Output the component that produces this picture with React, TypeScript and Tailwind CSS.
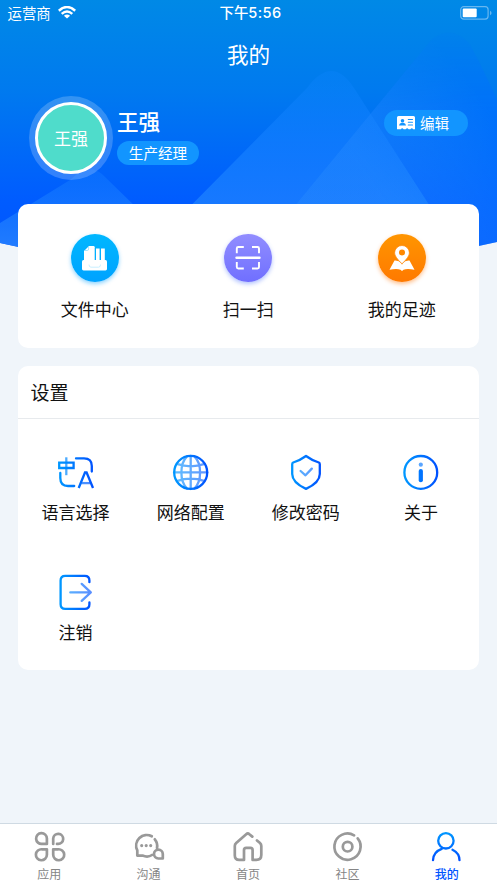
import type { ReactNode } from "react";

function Icon({ box, children, className = "" }: { box: string; children: ReactNode; className?: string }) {
  return (
    <svg viewBox={box} className={className} fill="none" strokeLinecap="round" strokeLinejoin="round" aria-hidden="true">
      {children}
    </svg>
  );
}

function Backdrop() {
  return (
    <svg className="absolute left-0 top-0 h-[300px] w-[497px]" viewBox="0 0 497 300" aria-hidden="true">
      <defs>
        <linearGradient id="sky" x1="0" y1="0" x2="0" y2="250" gradientUnits="userSpaceOnUse">
          <stop offset="0" stopColor="#0089e6" />
          <stop offset="0.36" stopColor="#007aef" />
          <stop offset="0.8" stopColor="#005cff" />
          <stop offset="1" stopColor="#0055ff" />
        </linearGradient>
        <linearGradient id="peakA" x1="0" y1="66" x2="0" y2="215" gradientUnits="userSpaceOnUse">
          <stop offset="0" stopColor="#0a84fa" stopOpacity="0.35" />
          <stop offset="0.5" stopColor="#1480ff" stopOpacity="0.65" />
          <stop offset="1" stopColor="#1c7dff" stopOpacity="0.9" />
        </linearGradient>
        <linearGradient id="peakB" x1="360" y1="170" x2="475" y2="90" gradientUnits="userSpaceOnUse">
          <stop offset="0" stopColor="#2b8fff" stopOpacity="0.36" />
          <stop offset="1" stopColor="#0070ff" stopOpacity="0.6" />
        </linearGradient>
        <linearGradient id="fade" x1="0" y1="32" x2="0" y2="110" gradientUnits="userSpaceOnUse">
          <stop offset="0" stopColor="#222" />
          <stop offset="1" stopColor="#fff" />
        </linearGradient>
        <mask id="fadeMask" maskUnits="userSpaceOnUse" x="0" y="0" width="497" height="300">
          <rect width="497" height="300" fill="url(#fade)" />
        </mask>
        <linearGradient id="peakC" x1="0" y1="165" x2="0" y2="245" gradientUnits="userSpaceOnUse">
          <stop offset="0" stopColor="#0f78ff" stopOpacity="0.45" />
          <stop offset="1" stopColor="#247fff" stopOpacity="0.9" />
        </linearGradient>
        <clipPath id="hill">
          <path d="M0 0H497V242Q248 300 0 243Z" />
        </clipPath>
      </defs>
      <g clipPath="url(#hill)">
        <rect width="497" height="300" fill="url(#sky)" />
        <path d="M0 223L70 180Q88 162 102 174L180 250V300H0Z" fill="url(#peakC)" />
        <path d="M145 252L307 88Q332 54 354 88L462 256Z" fill="url(#peakA)" />
        <path d="M257 252L432 39Q452 24 469 43Q480 62 497 100V300H257Z" fill="url(#peakB)" mask="url(#fadeMask)" />
      </g>
    </svg>
  );
}

function StatusBar() {
  return (
    <div className="grid h-[26px] grid-cols-3 items-center text-[14.4px] leading-none text-white">
      <div className="flex items-center gap-[7px] pl-[7.5px]">
        <span>运营商</span>
        <Icon box="0 0 18 13" className="-mt-[1px] h-[13px] w-[18px]">
          <g stroke="white" strokeWidth="2.5" strokeLinecap="butt">
            <path d="M.8 4.7Q9-2.6 17.2 4.7" />
            <path d="M3.7 7.9Q9 3.2 14.3 7.9" />
          </g>
          <path d="M9 12.6L5.9 9.8Q9 7.3 12.1 9.8Z" fill="white" />
        </Icon>
      </div>
      <div className="whitespace-nowrap pl-[4px] text-center font-medium">
        下午<span className="font-['Inter'] text-[14.6px] font-medium tracking-[0.35px]">5:56</span>
      </div>
      <div className="flex justify-end pr-[5px]">
        <Icon box="0 0 32 14" className="-mt-[1px] h-[14px] w-[32px]">
          <rect x=".7" y=".7" width="27.4" height="12.4" rx="3" stroke="white" strokeOpacity=".4" strokeWidth="1.2" />
          <rect x="2.7" y="2.6" width="14" height="8.7" rx="1" fill="white" />
          <path d="M30 4.8Q31.6 5.5 31.6 7T30 9.2Z" fill="white" fillOpacity=".4" />
        </Icon>
      </div>
    </div>
  );
}

function Profile() {
  return (
    <section className="flex h-[120px] items-start pl-[29px] pr-[29px] pt-[12px] text-white">
      <div className="flex size-[84px] shrink-0 rounded-full bg-white/20 p-[6px]">
        <div className="flex flex-1 items-center justify-center rounded-full border-[3px] border-white bg-[#4fdccb] text-[17px]">
          王强
        </div>
      </div>
      <div className="ml-[4px] mt-[11px] flex flex-1 flex-col items-start">
        <h2 className="text-[21.6px] font-medium leading-[28px]">王强</h2>
        <span className="mt-[6px] flex h-[24px] w-[82px] items-center justify-center rounded-full bg-[#1295ff] text-[14.6px]">
          生产经理
        </span>
      </div>
      <button className="mt-[14px] flex h-[26px] w-[84px] items-center gap-[5px] rounded-full bg-[#1295ff] pl-[13px] text-[14.5px]">
        <Icon box="397 116 18 14" className="h-[14px] w-[18px]">
          <path
            d="M398.5 116H413.5Q415 116 415 117.5V129.3H413.2Q411.8 127.4 410.3 129.3H408.6Q407.2 127.4 405.7 129.3H403.6Q402.2 127.4 400.8 129.3H397V117.5Q397 116 398.5 116Z"
            fill="white"
          />
          <circle cx="402.5" cy="120.8" r="1.8" fill="#1295ff" />
          <path d="M399 125.4Q399.3 123.3 401.4 122.8H403.6Q405.7 123.3 406 125.4Z" fill="#1295ff" />
          <path d="M408.3 119.5H412.5M408.3 122.3H412.5M408.3 125H412.5" stroke="#1295ff" strokeWidth="1.1" />
        </Icon>
        <span className="-mt-[1px]">编辑</span>
      </button>
    </section>
  );
}

const shortcuts = [
  {
    label: "文件中心",
    disc: "bg-linear-to-b from-[#00b7ff] to-[#00a2ff] shadow-[0_2px_4px_rgba(0,160,255,0.45)]",
    art: (
      <>
        <path d="M13 27V17L18 12H22.5Q23.7 12 23.7 13.2V27Z" fill="white" />
        <path d="M13.7 16.5H16.2Q17.6 16.5 17.6 15V12.8" stroke="#8fddff" strokeWidth=".8" />
        <path d="M25 14.5H28.6V27H25ZM30 14.5H33.8V27H30Z" fill="white" />
        <path d="M12.5 26H34.5Q36 26 36 27.5V35Q36 36.4 34.5 36.4H12.5Q11 36.4 11 35V27.5Q11 26 12.5 26Z" fill="white" />
        <path d="M18 31Q18 33.2 20 33.2H27.5Q29.5 33.2 29.5 31" stroke="#bdebff" strokeWidth=".8" />
      </>
    ),
  },
  {
    label: "扫一扫",
    disc: "bg-linear-to-b from-[#928dff] to-[#706fff] shadow-[0_2px_4px_rgba(80,120,255,0.45)]",
    art: (
      <g stroke="white" strokeWidth="1.9" strokeLinecap="butt">
        <path d="M12.8 19.3V14.5Q12.8 13 14.3 13H19.8M28 13H33.5Q35 13 35 14.5V19.3M35 28V33Q35 34.5 33.5 34.5H28M19.8 34.5H14.3Q12.8 34.5 12.8 33V28" />
        <path d="M12.5 23.7H35.5" strokeWidth="2.4" strokeLinecap="round" />
      </g>
    ),
  },
  {
    label: "我的足迹",
    disc: "bg-linear-to-b from-[#ff9500] to-[#ff7900] shadow-[0_2px_4px_rgba(255,115,0,0.45)]",
    art: (
      <>
        <path d="M16.5 26.5Q20.5 26 24 29.8Q27.5 26 31.5 26.5L36.5 35.8Q29 34 25.5 35.8L24 37L22.5 35.8Q19 34 11.5 35.8Z" fill="white" />
        <path d="M24 29.8Q16.6 22.9 16.6 18.9A7.4 7.4 0 0 1 31.4 18.9Q31.4 22.9 24 29.8Z" fill="white" stroke="#ff8500" strokeWidth=".7" />
        <circle cx="24" cy="18.4" r="3" fill="#ff8800" />
      </>
    ),
  },
];

function Shortcuts() {
  return (
    <section className="mx-[18px] grid h-[144px] w-[460.5px] grid-cols-3 rounded-[10px] bg-white pt-[30px]">
      {shortcuts.map((item) => (
        <div key={item.label} className="flex flex-col items-center">
          <div className={`size-[48px] rounded-full ${item.disc}`}>
            <Icon box="0 0 48 48" className="size-[48px]">{item.art}</Icon>
          </div>
          <span className="mt-[15px] text-[17px] leading-[24px]">{item.label}</span>
        </div>
      ))}
    </section>
  );
}

const settings = [
  {
    label: "语言选择",
    box: "57 453 38 38",
    grad: [58, 94],
    art: (
      <>
        <path d="M76 458.4H84Q91.8 458.4 91.8 466V471.5M60.3 473V478Q60.3 486 68 486H74.2" />
        <g strokeLinecap="butt" strokeLinejoin="miter">
          <path d="M59.2 462.6H73.6V468H59.2Z" />
          <path d="M66.3 457.3V475.2" opacity=".7" />
          <path d="M78.7 488L85 472.5H86.6L93 488" />
          <path d="M81.3 483.1H90.5" opacity=".7" />
        </g>
      </>
    ),
  },
  {
    label: "网络配置",
    box: "172 453 38 38",
    grad: [174, 208],
    art: (
      <>
        <circle cx="190.7" cy="472.4" r="16.5" />
        <g opacity=".62">
          <path d="M190.7 456V489M174 472.4H207.3M177.5 464.2Q190.7 468.4 204 464.2M177.5 480.8Q190.7 476.6 204 480.8M187 456.4C179.5 464 179.5 481 187 488.6M194.4 456.4C202 464 202 481 194.4 488.6" />
        </g>
      </>
    ),
  },
  {
    label: "修改密码",
    box: "287 453 38 38",
    grad: [291, 321],
    art: (
      <>
        <path d="M306 456Q300 460.4 293.2 462.5Q292.2 463 292.2 464.3V474Q292.2 482.5 306 488.9Q319.8 482.5 319.8 474V464.3Q319.8 463 318.8 462.5Q312 460.4 306 456Z" />
        <path d="M300.6 471L305.5 475.3L311.8 468.6" opacity=".65" />
      </>
    ),
  },
  {
    label: "关于",
    box: "402 453 38 38",
    grad: [404, 438],
    art: (
      <>
        <circle cx="420.8" cy="472.4" r="16.4" />
        <path d="M420.8 471V480.2" strokeWidth="4.2" />
        <path d="M420.8 464.6V464.7" strokeWidth="4.2" opacity=".65" />
      </>
    ),
  },
  {
    label: "注销",
    box: "57 573 38 38",
    grad: [60, 92],
    art: (
      <>
        <path d="M89.4 582.2V580.5Q89.4 575.8 84.8 575.8H65.2Q60.6 575.8 60.6 580.5V604.3Q60.6 608.9 65.2 608.9H84.8Q89.4 608.9 89.4 604.3V602.5" />
        <path d="M70.3 592.4H90.6M81.7 583.9L90.8 592.4L81.7 600.9" opacity=".65" />
      </>
    ),
  },
];

function Settings() {
  return (
    <section className="mx-[18px] mt-[18px] h-[304px] w-[460.5px] rounded-[10px] bg-white">
      <h3 className="flex h-[53px] items-center border-b border-[#e7eaed] pl-[12.5px] text-[19px]">设置</h3>
      <div className="grid grid-cols-4 pt-[34px]">
        {settings.map((item, i) => (
          <div key={item.label} className="flex h-[120px] flex-col items-center">
            <Icon box={item.box} className="size-[38px]">
              <defs>
                <linearGradient id={`stroke${i}`} x1={item.grad[0]} y1="0" x2={item.grad[1]} y2="0" gradientUnits="userSpaceOnUse">
                  <stop offset="0" stopColor="#0098ff" />
                  <stop offset="1" stopColor="#0050ff" />
                </linearGradient>
              </defs>
              <g stroke={`url(#stroke${i})`} strokeWidth="2.3">{item.art}</g>
            </Icon>
            <span className="mt-[9px] text-[17px] leading-[24px]">{item.label}</span>
          </div>
        ))}
      </div>
    </section>
  );
}

const tabs = [
  {
    label: "应用",
    box: "33 830 34 34",
    art: (
      <path d="M46.9 843.9H42A5.4 5.4 0 1 1 46.9 838.5ZM53.2 844V838.5A5 5 0 1 1 58 843.9H57M46.9 849.3H42A5.5 5.5 0 1 0 46.9 854.8ZM53.2 849.3H58A5.5 5.5 0 1 1 53.2 854.8Z" />
    ),
  },
  {
    label: "沟通",
    box: "132 830 34 34",
    art: (
      <>
        <path d="M151.8 836.3A10.6 10.6 0 0 0 137.3 850.4V855.6H142.5Q148 857.8 152 855M154.8 839.3A10.6 10.6 0 0 1 157 848" />
        <path d="M162.8 858.5H158.3A4.4 4.4 0 1 1 162.8 854Z" />
        <path d="M141.7 845.5V845.6M146.2 845.5V845.6M150.7 845.5V845.6" strokeWidth="3.2" />
      </>
    ),
  },
  {
    label: "首页",
    box: "231 830 34 34",
    art: (
      <path d="M252.3 836.6L249.4 834.2Q247.8 832.8 246.2 834.2L236.2 843Q234.8 844.2 234.8 846V855.5Q234.8 859.9 239.2 859.9H244V850Q244 847.8 246.2 847.8H250.5Q252.6 847.8 252.6 850V859.9H256.3Q261.3 859.9 261.3 855V846Q261.3 844.3 260 843.1L257 840.5" />
    ),
  },
  {
    label: "社区",
    box: "330.5 830 34 34",
    art: (
      <>
        <path d="M357.2 838.4A13.1 13.1 0 1 1 353.6 835.3" />
        <circle cx="347.1" cy="846.7" r="4.8" />
      </>
    ),
  },
  {
    label: "我的",
    box: "430.5 830 34 34",
    active: true,
    art: (
      <>
        <circle cx="446.4" cy="840.8" r="7.7" />
        <path d="M433.5 860.2Q433.8 851.8 442.2 848.8M453 849.8Q460 853.3 460 860.2" />
      </>
    ),
  },
];

function TabBar() {
  return (
    <nav className="mt-auto grid h-[60px] grid-cols-5 border-t border-[#cfdae3] bg-white pt-[6px] text-[12px] text-[#858585]">
      {tabs.map((tab) => (
        <div key={tab.label} className={tab.active ? "flex flex-col items-center text-[#0055ff]" : "flex flex-col items-center"}>
          <Icon box={tab.box} className="size-[34px]">
            <defs>
              <linearGradient id="person" x1="0" y1="832" x2="0" y2="861" gradientUnits="userSpaceOnUse">
                <stop offset="0" stopColor="#0098ff" />
                <stop offset="1" stopColor="#004eff" />
              </linearGradient>
            </defs>
            <g stroke={tab.active ? "url(#person)" : "#999999"} strokeWidth={tab.active ? 2.3 : 2.7}>{tab.art}</g>
          </Icon>
          <span className={tab.active ? "mt-[2px] pr-px font-medium leading-[16px]" : "mt-[2px] pr-px leading-[16px]"}>{tab.label}</span>
        </div>
      ))}
    </nav>
  );
}

export default function App() {
  return (
    <div className="relative h-[883px] w-[497px] overflow-hidden bg-[#f0f5fa] font-['Noto_Sans_CJK_SC',sans-serif] text-[#111]">
      <Backdrop />
      <div className="relative flex h-full flex-col">
        <StatusBar />
        <h1 className="flex h-[58px] items-center justify-center pb-[2px] text-[21.6px] text-white">我的</h1>
        <Profile />
        <Shortcuts />
        <Settings />
        <TabBar />
      </div>
    </div>
  );
}
